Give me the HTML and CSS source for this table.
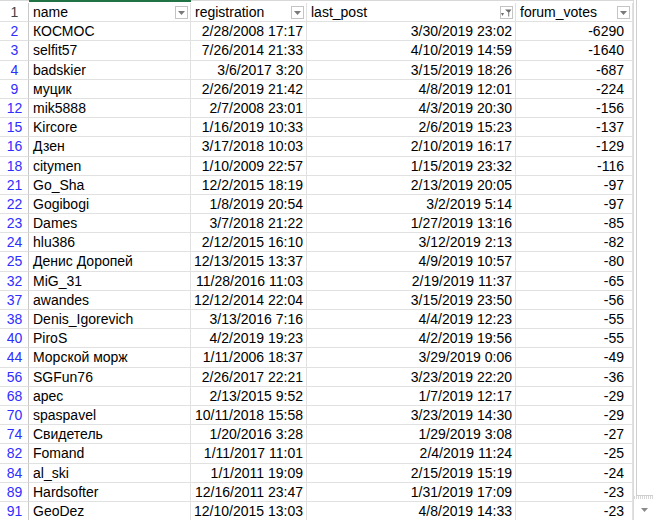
FILE: index.html
```html
<!DOCTYPE html>
<html>
<head>
<meta charset="utf-8">
<link rel="stylesheet" href="styles.css">
</head>
<body>
<div class="wrap">
  <div class="sheet">
    <div class="colbar"><div class="rh"></div><div class="sel"></div><div class="rest"></div></div>
    <div class="grid">
      <div class="c n h">1</div>
      <div class="c t hd"><span>name</span><i class="fb"><svg width="7" height="4" viewBox="0 0 7 4"><path d="M0 0h7L3.5 4z" fill="#7a7a7a"/></svg></i></div>
      <div class="c t hd"><span>registration</span><i class="fb"><svg width="7" height="4" viewBox="0 0 7 4"><path d="M0 0h7L3.5 4z" fill="#7a7a7a"/></svg></i></div>
      <div class="c t hd"><span>last_post</span><i class="fb"><svg width="11" height="8" viewBox="0 0 11 8"><path d="M0 4h3L1.5 7z" fill="#6a6a6a"/><path d="M4 0.5h6.5L8.2 3.5V7.5H7.3V3.5z" fill="#6a6a6a"/></svg></i></div>
      <div class="c t hd"><span>forum_votes</span><i class="fb"><svg width="7" height="4" viewBox="0 0 7 4"><path d="M0 0h7L3.5 4z" fill="#7a7a7a"/></svg></i></div>

      <div class="c n">2</div><div class="c t">КОСМОС</div><div class="c r">2/28/2008 17:17</div><div class="c r">3/30/2019 23:02</div><div class="c r v">-6290</div>
      <div class="c n">3</div><div class="c t">selfit57</div><div class="c r">7/26/2014 21:33</div><div class="c r">4/10/2019 14:59</div><div class="c r v">-1640</div>
      <div class="c n">4</div><div class="c t">badskier</div><div class="c r">3/6/2017 3:20</div><div class="c r">3/15/2019 18:26</div><div class="c r v">-687</div>
      <div class="c n">9</div><div class="c t">муцик</div><div class="c r">2/26/2019 21:42</div><div class="c r">4/8/2019 12:01</div><div class="c r v">-224</div>
      <div class="c n">12</div><div class="c t">mik5888</div><div class="c r">2/7/2008 23:01</div><div class="c r">4/3/2019 20:30</div><div class="c r v">-156</div>
      <div class="c n">15</div><div class="c t">Kircore</div><div class="c r">1/16/2019 10:33</div><div class="c r">2/6/2019 15:23</div><div class="c r v">-137</div>
      <div class="c n">16</div><div class="c t">Дзен</div><div class="c r">3/17/2018 10:03</div><div class="c r">2/10/2019 16:17</div><div class="c r v">-129</div>
      <div class="c n">18</div><div class="c t">citymen</div><div class="c r">1/10/2009 22:57</div><div class="c r">1/15/2019 23:32</div><div class="c r v">-116</div>
      <div class="c n">21</div><div class="c t">Go_Sha</div><div class="c r">12/2/2015 18:19</div><div class="c r">2/13/2019 20:05</div><div class="c r v">-97</div>
      <div class="c n">22</div><div class="c t">Gogibogi</div><div class="c r">1/8/2019 20:54</div><div class="c r">3/2/2019 5:14</div><div class="c r v">-97</div>
      <div class="c n">23</div><div class="c t">Dames</div><div class="c r">3/7/2018 21:22</div><div class="c r">1/27/2019 13:16</div><div class="c r v">-85</div>
      <div class="c n">24</div><div class="c t">hlu386</div><div class="c r">2/12/2015 16:10</div><div class="c r">3/12/2019 2:13</div><div class="c r v">-82</div>
      <div class="c n">25</div><div class="c t">Денис Доропей</div><div class="c r">12/13/2015 13:37</div><div class="c r">4/9/2019 10:57</div><div class="c r v">-80</div>
      <div class="c n">32</div><div class="c t">MiG_31</div><div class="c r">11/28/2016 11:03</div><div class="c r">2/19/2019 11:37</div><div class="c r v">-65</div>
      <div class="c n">37</div><div class="c t">awandes</div><div class="c r">12/12/2014 22:04</div><div class="c r">3/15/2019 23:50</div><div class="c r v">-56</div>
      <div class="c n">38</div><div class="c t">Denis_Igorevich</div><div class="c r">3/13/2016 7:16</div><div class="c r">4/4/2019 12:23</div><div class="c r v">-55</div>
      <div class="c n">40</div><div class="c t">PiroS</div><div class="c r">4/2/2019 19:23</div><div class="c r">4/2/2019 19:56</div><div class="c r v">-55</div>
      <div class="c n">44</div><div class="c t">Морской морж</div><div class="c r">1/11/2006 18:37</div><div class="c r">3/29/2019 0:06</div><div class="c r v">-49</div>
      <div class="c n">56</div><div class="c t">SGFun76</div><div class="c r">2/26/2017 22:21</div><div class="c r">3/23/2019 22:20</div><div class="c r v">-36</div>
      <div class="c n">68</div><div class="c t">apec</div><div class="c r">2/13/2015 9:52</div><div class="c r">1/7/2019 12:17</div><div class="c r v">-29</div>
      <div class="c n">70</div><div class="c t">spaspavel</div><div class="c r">10/11/2018 15:58</div><div class="c r">3/23/2019 14:30</div><div class="c r v">-29</div>
      <div class="c n">74</div><div class="c t">Свидетель</div><div class="c r">1/20/2016 3:28</div><div class="c r">1/29/2019 3:08</div><div class="c r v">-27</div>
      <div class="c n">82</div><div class="c t">Fomand</div><div class="c r">1/11/2017 11:01</div><div class="c r">2/4/2019 11:24</div><div class="c r v">-25</div>
      <div class="c n">84</div><div class="c t">al_ski</div><div class="c r">1/1/2011 19:09</div><div class="c r">2/15/2019 15:19</div><div class="c r v">-24</div>
      <div class="c n">89</div><div class="c t">Hardsofter</div><div class="c r">12/16/2011 23:47</div><div class="c r">1/31/2019 17:09</div><div class="c r v">-23</div>
      <div class="c n">91</div><div class="c t">GeoDez</div><div class="c r">12/10/2015 13:03</div><div class="c r">4/8/2019 14:33</div><div class="c r v">-23</div>
    </div>
  </div>
  <div class="scroll">
    <div class="thumb"></div>
    <div class="dots"></div>
    <div class="arrow"><svg width="7" height="4" viewBox="0 0 7 4"><path d="M0 0h7L3.5 4z" fill="#8a8a8a"/></svg></div>
  </div>
</div>
</body>
</html>
```

FILE: styles.css
```css
html, body {
  margin: 0;
  padding: 0;
  background: #fff;
}
body {
  width: 653px;
  height: 520px;
  overflow: hidden;
  font-family: "Liberation Sans", Arial, sans-serif;
  font-size: 14px;
  color: #000;
}
.wrap {
  display: flex;
  height: 520px;
}
.sheet {
  width: 633px;
  flex: none;
}
.colbar {
  display: flex;
  height: 3px;
  border-top: 1px solid #d8d8d8;
  box-sizing: border-box;
}
.colbar .rh { width: 29px; }
.colbar .sel { width: 162px; background: #217346; margin-top: -1px; height: 2px; }
.colbar .rest { flex: 1; }
.grid {
  display: grid;
  grid-template-columns: 29px 162px 116px 209px 117px;
  grid-auto-rows: 19.2px;
}
.c {
  box-sizing: border-box;
  border-right: 1px solid #e1e1e1;
  border-bottom: 1px solid #e1e1e1;
  line-height: 18px;
  white-space: nowrap;
  overflow: hidden;
}
.n {
  text-align: center;
  color: #2e2eff;
  border-right: 1px solid #c9c9c9;
  padding-left: 1px;
}
.n.h { color: #444; }
.t { padding-left: 4px; }
.r { text-align: right; padding-right: 3px; }
.v { padding-right: 8px; }
.hd {
  display: flex;
  align-items: center;
  justify-content: space-between;
  padding-right: 2px;
}
.fb {
  width: 13px;
  height: 13px;
  box-sizing: border-box;
  border: 1px solid #c4c4c4;
  background: #fff;
  display: flex;
  align-items: center;
  justify-content: center;
  margin-top: 1px;
}
.scroll {
  flex: 1;
  border-left: 1px solid #dadada;
  display: flex;
  flex-direction: column;
  background: #fff;
}
.thumb {
  height: 497px;
  margin-left: 2px;
  border-left: 1px solid #cfcfcf;
  border-bottom: 1px solid #cfcfcf;
  box-sizing: border-box;
  margin-top: -1px;
}
.dots {
  height: 3px;
  background: repeating-linear-gradient(90deg, #d6d6d6 0 1px, #fff 1px 2px);
}
.arrow {
  flex: 1;
  display: flex;
  align-items: center;
  justify-content: center;
  padding-left: 2px;
}
```
